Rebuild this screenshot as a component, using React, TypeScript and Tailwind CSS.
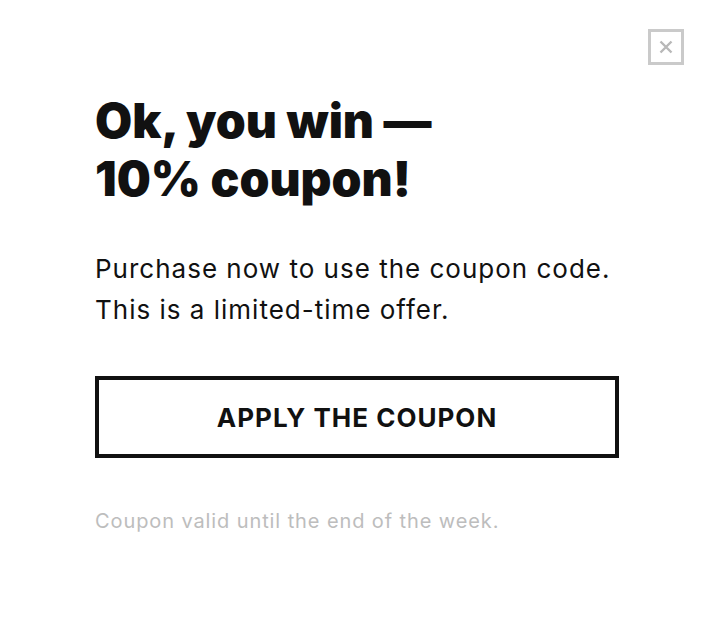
import React from "react";

export default function App() {
  return (
    <div className="w-[714px] h-[632px] bg-white relative" style={{ fontFamily: "Inter, 'Noto Sans', sans-serif" }}>
      <button className="absolute left-[648px] top-[29px] w-[36px] h-[36px] border-[3px] border-[#cacaca] flex items-center justify-center">
        <svg width="16" height="16" viewBox="0 0 16 16">
          <path d="M2.5 2.5 L13.5 13.5 M13.5 2.5 L2.5 13.5" stroke="#b8b8b8" strokeWidth="2.4" />
        </svg>
      </button>
      <div className="pl-[95px] pt-[92px] w-[619px] flex flex-col">
        <h1 className="text-[48px] leading-[58px] font-black text-[#111]">
          Ok, you win —<br />10% coupon!
        </h1>
        <p className="mt-[40px] text-[26px] leading-[41px] tracking-[1px] text-[#111]">
          Purchase now to use the coupon code.<br />This is a limited-time offer.
        </p>
        <button className="mt-[46px] h-[82px] w-full border-[4px] border-[#111] text-[26px] font-bold tracking-[1px] text-[#111]">
          APPLY THE COUPON
        </button>
        <p className="mt-[48px] text-[20px] tracking-[0.9px] text-[#bdbdbd]">Coupon valid until the end of the week.</p>
      </div>
    </div>
  );
}
